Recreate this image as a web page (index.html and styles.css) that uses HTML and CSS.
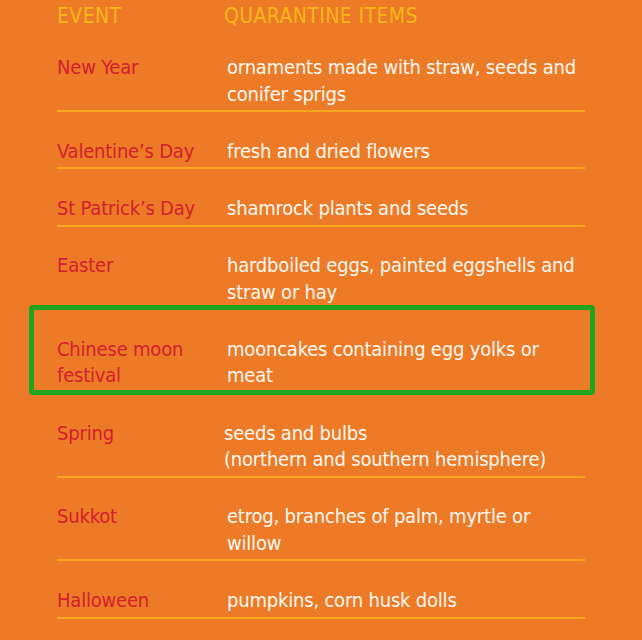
FILE: index.html
```html
<!DOCTYPE html>
<html>
<head>
<meta charset="utf-8">
<link rel="stylesheet" href="styles.css">
</head>
<body>
<div class="table">
  <div class="head">
    <div class="c1">EVENT</div>
    <div class="c2 hshift">QUARANTINE ITEMS</div>
  </div>
  <div class="row">
    <div class="c1 ev">New Year</div>
    <div class="c2 it">ornaments made with straw, seeds and<br>conifer sprigs</div>
  </div>
  <div class="row">
    <div class="c1 ev">Valentine’s Day</div>
    <div class="c2 it">fresh and dried flowers</div>
  </div>
  <div class="row">
    <div class="c1 ev">St Patrick’s Day</div>
    <div class="c2 it">shamrock plants and seeds</div>
  </div>
  <div class="row">
    <div class="c1 ev">Easter</div>
    <div class="c2 it">hardboiled eggs, painted eggshells and<br>straw or hay</div>
  </div>
  <div class="row highlight">
    <div class="c1 ev">Chinese moon<br>festival</div>
    <div class="c2 it">mooncakes containing egg yolks or<br>meat</div>
  </div>
  <div class="row">
    <div class="c1 ev">Spring</div>
    <div class="c2 it shift">seeds and bulbs<br>(northern and southern hemisphere)</div>
  </div>
  <div class="row">
    <div class="c1 ev">Sukkot</div>
    <div class="c2 it">etrog, branches of palm, myrtle or<br>willow</div>
  </div>
  <div class="row">
    <div class="c1 ev">Halloween</div>
    <div class="c2 it">pumpkins, corn husk dolls</div>
  </div>
</div>
</body>
</html>
```
FILE: styles.css
```css
html, body {
  margin: 0;
  padding: 0;
  background: #EC7A27;
}
body {
  font-family: "DejaVu Sans Condensed", "DejaVu Sans", sans-serif;
  font-stretch: condensed;
  font-size: 20px;
  line-height: 26.4px;
  letter-spacing: -0.2px;
}
.table {
  width: 528px;
  margin-left: 57px;
}
.head, .row {
  display: grid;
  grid-template-columns: 170px 1fr;
}
.head {
  margin-top: 2.5px;
  color: #F9B719;
  font-size: 21px;
  letter-spacing: 0.4px;
}
.hshift {
  margin-left: -3px;
}
.row {
  position: relative;
  padding-top: 25.7px;
  padding-bottom: 3.2px;
  border-bottom: 2px solid #F7A820;
}
.head + .row {
  padding-top: 25.2px;
}
.ev {
  color: #D4202F;
}
.it {
  color: #FFF8F0;
}
.it.shift {
  margin-left: -3px;
}
.highlight::after {
  content: "";
  position: absolute;
  left: -28px;
  right: -10px;
  top: -5.5px;
  bottom: -3px;
  border: 5px solid #1FA51F;
  border-radius: 4px;
}
```
